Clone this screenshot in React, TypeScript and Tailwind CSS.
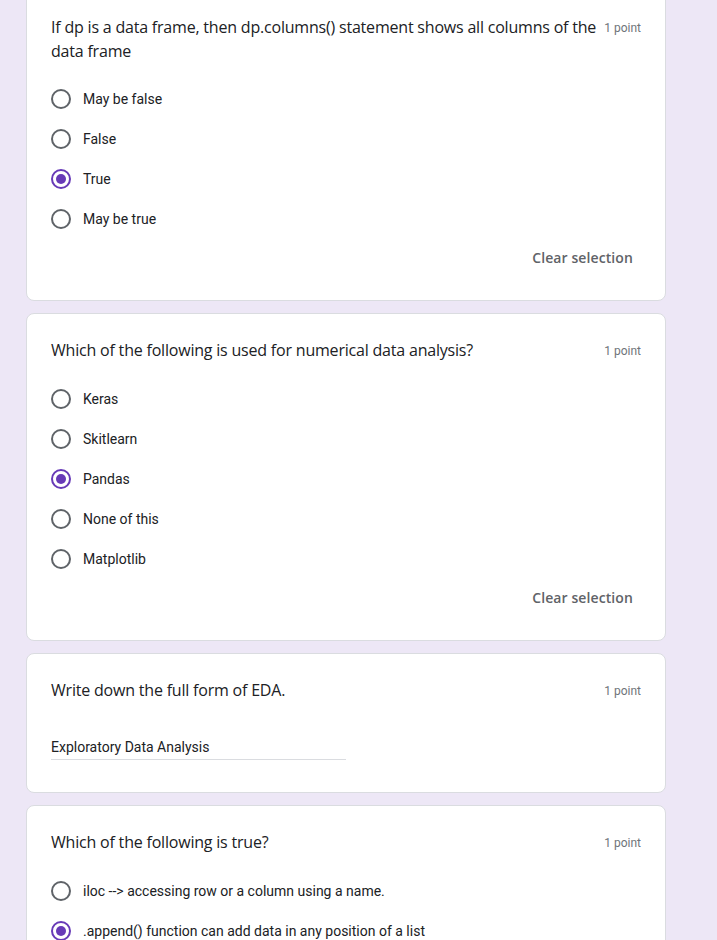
import React from "react";

const titleFont = { fontFamily: '"Open Sans", "Noto Sans", sans-serif' };
const roboto = { fontFamily: 'Roboto, "Liberation Sans", sans-serif' };

function Radio({ checked }: { checked?: boolean }) {
  return (
    <div
      className={
        "w-5 h-5 rounded-full border-2 flex items-center justify-center shrink-0 " +
        (checked ? "border-[#673ab7]" : "border-[#5f6368]")
      }
    >
      {checked && <div className="w-2.5 h-2.5 rounded-full bg-[#673ab7]" />}
    </div>
  );
}

function Header({ title }: { title: React.ReactNode }) {
  return (
    <div className="flex items-start justify-between">
      <div
        className="text-[16px] leading-6 text-[#202124] tracking-[-0.2px] flex-1 pr-2"
        style={titleFont}
      >
        {title}
      </div>
      <div className="text-[12px] leading-6 pt-[1px] text-[#70757a] whitespace-nowrap" style={roboto}>
        1 point
      </div>
    </div>
  );
}

function Options({ items, selected }: { items: string[]; selected: number }) {
  return (
    <div className="mt-4 flex flex-col">
      {items.map((t, i) => (
        <div key={i} className="h-10 flex items-center gap-3">
          <Radio checked={i === selected} />
          <span className="text-[14px] text-[#202124]" style={roboto}>
            {t}
          </span>
        </div>
      ))}
    </div>
  );
}

function Clear() {
  return (
    <div className="flex justify-end h-9 items-center pr-2">
      <span className="text-[14px] font-semibold text-[#5f6368] tracking-[0.1px]" style={titleFont}>
        Clear selection
      </span>
    </div>
  );
}

function Card({ children, className = "" }: { children: React.ReactNode; className?: string }) {
  return (
    <div className={"bg-white border border-[#dadce0] rounded-lg px-6 pt-6 " + className}>
      {children}
    </div>
  );
}

export default function App() {
  return (
    <div className="min-h-[940px] bg-[#ede7f6] overflow-hidden">
      <div className="ml-[26px] w-[640px] -mt-[10px] flex flex-col gap-3">
        <Card className="pb-[25px]">
          <Header title="If dp is a data frame, then dp.columns() statement shows all columns of the data frame" />
          <Options items={["May be false", "False", "True", "May be true"]} selected={2} />
          <Clear />
        </Card>
        <Card className="pb-[25px]">
          <Header title="Which of the following is used for numerical data analysis?" />
          <Options
            items={["Keras", "Skitlearn", "Pandas", "None of this", "Matplotlib"]}
            selected={2}
          />
          <Clear />
        </Card>
        <Card className="pb-[32px]">
          <Header title="Write down the full form of EDA." />
          <div className="mt-[31px] w-[295px] border-b border-[#dadce0] pb-[1px]">
            <span className="text-[14px] text-[#202124]" style={roboto}>
              Exploratory Data Analysis
            </span>
          </div>
        </Card>
        <Card className="pb-6">
          <Header title="Which of the following is true?" />
          <Options
            items={[
              "iloc --> accessing row or a column using a name.",
              ".append() function can add data in any position of a list",
              "loc --> accessing row or a column using an index.",
            ]}
            selected={1}
          />
        </Card>
      </div>
    </div>
  );
}
